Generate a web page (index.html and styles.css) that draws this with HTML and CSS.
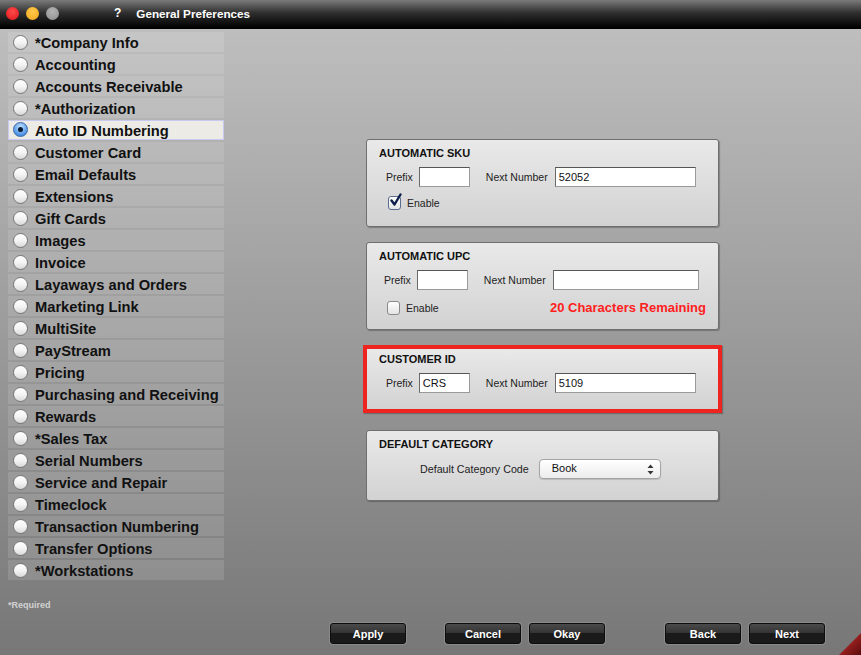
FILE: index.html
```html
<!DOCTYPE html>
<html lang="en">
<head>
    <meta charset="UTF-8">
    <title>General Preferences</title>
    <link rel="stylesheet" href="styles.css">
</head>
<body>
    <div class="window">
        <div class="titlebar">
            <span class="light red"></span>
            <span class="light yellow"></span>
            <span class="light gray"></span>
            <span class="help">?</span>
            <span class="title">General Preferences</span>
        </div>

        <div class="main">
            <div class="sidebar">
                <ul class="pref-list">
                    <li><span class="radio"></span>*Company Info</li>
                    <li><span class="radio"></span>Accounting</li>
                    <li><span class="radio"></span>Accounts Receivable</li>
                    <li><span class="radio"></span>*Authorization</li>
                    <li class="selected"><span class="radio"></span>Auto ID Numbering</li>
                    <li><span class="radio"></span>Customer Card</li>
                    <li><span class="radio"></span>Email Defaults</li>
                    <li><span class="radio"></span>Extensions</li>
                    <li><span class="radio"></span>Gift Cards</li>
                    <li><span class="radio"></span>Images</li>
                    <li><span class="radio"></span>Invoice</li>
                    <li><span class="radio"></span>Layaways and Orders</li>
                    <li><span class="radio"></span>Marketing Link</li>
                    <li><span class="radio"></span>MultiSite</li>
                    <li><span class="radio"></span>PayStream</li>
                    <li><span class="radio"></span>Pricing</li>
                    <li><span class="radio"></span>Purchasing and Receiving</li>
                    <li><span class="radio"></span>Rewards</li>
                    <li><span class="radio"></span>*Sales Tax</li>
                    <li><span class="radio"></span>Serial Numbers</li>
                    <li><span class="radio"></span>Service and Repair</li>
                    <li><span class="radio"></span>Timeclock</li>
                    <li><span class="radio"></span>Transaction Numbering</li>
                    <li><span class="radio"></span>Transfer Options</li>
                    <li><span class="radio"></span>*Workstations</li>
                </ul>
                <div class="required-note">*Required</div>
            </div>

            <div class="content">
                <div class="panel panel-sku">
                    <h3>AUTOMATIC SKU</h3>
                    <div class="field-row">
                        <label>Prefix</label>
                        <input type="text" class="prefix">
                        <label class="next-label">Next Number</label>
                        <input type="text" class="next" value="52052">
                    </div>
                    <div class="check-row">
                        <span class="checkbox checked">
                            <svg width="16" height="16" viewBox="0 0 16 16"><path d="M3.5 7.5 L6.5 11.5 L12.5 1.5" fill="none" stroke="#0d1d4a" stroke-width="2.4" stroke-linecap="round" stroke-linejoin="round"/></svg>
                        </span>
                        <span class="check-label">Enable</span>
                    </div>
                </div>

                <div class="panel panel-upc">
                    <h3>AUTOMATIC UPC</h3>
                    <div class="field-row">
                        <label>Prefix</label>
                        <input type="text" class="prefix">
                        <label class="next-label">Next Number</label>
                        <input type="text" class="next wide">
                    </div>
                    <div class="check-row">
                        <span class="checkbox"></span>
                        <span class="check-label">Enable</span>
                        <span class="remaining">20 Characters Remaining</span>
                    </div>
                </div>

                <div class="panel panel-customer">
                    <h3>CUSTOMER ID</h3>
                    <div class="field-row">
                        <label>Prefix</label>
                        <input type="text" class="prefix" value="CRS">
                        <label class="next-label">Next Number</label>
                        <input type="text" class="next" value="5109">
                    </div>
                </div>

                <div class="panel panel-category">
                    <h3>DEFAULT CATEGORY</h3>
                    <div class="select-row">
                        <label>Default Category Code</label>
                        <div class="select">
                            <span>Book</span>
                            <svg width="7" height="11" viewBox="0 0 7 11"><path d="M3.5 0.5 L6.5 4 L0.5 4 Z M0.5 7 L6.5 7 L3.5 10.5 Z" fill="#333"/></svg>
                        </div>
                    </div>
                </div>
            </div>
        </div>

        <div class="footer">
            <button class="btn btn-apply">Apply</button>
            <button class="btn btn-cancel">Cancel</button>
            <button class="btn">Okay</button>
            <button class="btn btn-back">Back</button>
            <button class="btn">Next</button>
        </div>

        <svg class="corner" width="22" height="22" viewBox="0 0 22 22">
            <defs>
                <linearGradient id="cg" x1="0" y1="0" x2="1" y2="1">
                    <stop offset="0" stop-color="#d23434"/>
                    <stop offset="1" stop-color="#5a0a0a"/>
                </linearGradient>
            </defs>
            <path d="M22 0 L22 22 L0 22 Z" fill="url(#cg)"/>
        </svg>
    </div>
</body>
</html>
```

FILE: styles.css
```css
* {
    box-sizing: border-box;
}

body {
    margin: 0;
    font-family: "Liberation Sans", Arial, sans-serif;
    color: #111;
}

.window {
    position: relative;
    width: 861px;
    height: 655px;
    display: flex;
    flex-direction: column;
    background: linear-gradient(#c1c1c1, #777777);
    overflow: hidden;
}

/* title bar */
.titlebar {
    height: 29px;
    flex-shrink: 0;
    display: flex;
    align-items: center;
    padding-left: 6px;
    background: linear-gradient(#7a7a7a, #303030 45%, #000 100%);
    border-bottom: 1px solid #000;
}

.light {
    width: 13px;
    height: 13px;
    border-radius: 50%;
    margin-right: 7px;
    margin-top: -2px;
}

.light.red { background: radial-gradient(circle at 50% 35%, #ff4a4a, #e0161c); }
.light.yellow { background: radial-gradient(circle at 50% 35%, #ffc94a, #f3a71d); }
.light.gray { background: radial-gradient(circle at 50% 35%, #b4b4b4, #8d8d8d); }

.help {
    color: #fff;
    font-size: 12px;
    font-weight: bold;
    margin-left: 48px;
    margin-top: -2px;
}

.title {
    color: #fff;
    font-size: 11.7px;
    font-weight: bold;
    margin-left: 15px;
    margin-top: -2px;
}

/* main */
.main {
    flex: 1;
    display: flex;
}

.sidebar {
    width: 224px;
    padding: 3px 0 0 8px;
    flex-shrink: 0;
}

.pref-list {
    list-style: none;
    margin: 0;
    padding: 0;
}

.pref-list li {
    height: 20px;
    margin-bottom: 2px;
    display: flex;
    align-items: center;
    padding: 2px 0 0 5px;
    font-size: 14.7px;
    font-weight: bold;
    color: #111;
    background: rgba(255, 255, 255, 0.12);
}

.pref-list li.selected {
    background: #ecebe5;
    border: 1px solid #c9c8ee;
    padding: 1px 0 0 4px;
}

.radio {
    width: 15px;
    height: 15px;
    border-radius: 50%;
    border: 1px solid #777;
    background: linear-gradient(#ffffff, #f4f4f4 50%, #d9d9d9);
    margin-right: 7px;
    margin-top: -2px;
    flex-shrink: 0;
    display: flex;
    align-items: center;
    justify-content: center;
}

.selected .radio {
    border-color: #3a66a8;
    background: radial-gradient(circle at 50% 30%, #bfe0ff, #4f95e6 70%, #2d6bc4);
}

.selected .radio::after {
    content: "";
    width: 5px;
    height: 5px;
    border-radius: 50%;
    background: #0b1a33;
}

.required-note {
    margin-top: 20px;
    font-size: 9px;
    font-weight: bold;
    color: #d2d2d2;
}

/* panels */
.content {
    flex: 1;
    padding: 110px 0 0 142px;
    display: flex;
    flex-direction: column;
}

.panel {
    width: 353px;
    border: 1px solid #6f6f6f;
    border-radius: 3px;
    background: linear-gradient(#e9e9e9, #d2d2d2);
    box-shadow: 1px 1px 1px rgba(0, 0, 0, 0.25);
    padding: 6px 0 0 12px;
}

.panel h3 {
    margin: 0;
    font-size: 11px;
    font-weight: bold;
    line-height: 15px;
    color: #111;
}

.panel-sku {
    height: 88px;
    margin-bottom: 15px;
}

.panel-upc {
    height: 88px;
    margin-bottom: 15px;
}

.panel-customer {
    height: 68px;
    width: 359px;
    margin-left: -3px;
    border: 4px solid #ee2420;
    border-radius: 0;
    padding: 3px 0 0 12px;
    margin-bottom: 17px;
}

.panel-category {
    height: 71px;
}

.field-row {
    display: flex;
    align-items: center;
    margin-top: 6px;
    padding-left: 7px;
    font-size: 10.5px;
    color: #222;
}

.panel-upc .field-row {
    padding-left: 5px;
}

.field-row label {
    margin-right: 6px;
}

.field-row .next-label {
    margin-left: 16px;
    margin-right: 7px;
}

.panel-upc .next-label {
    margin-left: 16px;
}

.field-row input {
    height: 20px;
    border: 1px solid #9a9a9a;
    border-top-color: #555;
    border-left-color: #6a6a6a;
    background: #fff;
    font-family: "Liberation Sans", Arial, sans-serif;
    font-size: 11px;
    padding: 0 3px;
    color: #111;
}

.field-row .prefix {
    width: 51px;
}

.field-row .next {
    width: 141px;
}

.field-row .next.wide {
    width: 146px;
}

.check-row {
    display: flex;
    align-items: center;
    margin-top: 9px;
    padding-left: 9px;
    padding-right: 12px;
    font-size: 10.5px;
    color: #222;
}

.panel-upc .check-row {
    padding-left: 8px;
    margin-top: 10px;
}

.checkbox {
    width: 13px;
    height: 14px;
    border: 1px solid #8a8a8a;
    border-radius: 3px;
    background: linear-gradient(#ffffff, #e4e4e4);
    position: relative;
    margin-right: 6px;
}

.checkbox.checked {
    border-color: #5b6c8f;
}

.checkbox svg {
    position: absolute;
    left: -1px;
    top: -4px;
}

.remaining {
    margin-left: auto;
    color: #ff2020;
    font-size: 13px;
    font-weight: bold;
}

.select-row {
    display: flex;
    align-items: center;
    margin-top: 7px;
    padding-left: 41px;
    font-size: 10.7px;
    color: #222;
}

.select-row label {
    margin-right: 10px;
}

.select {
    width: 122px;
    height: 20px;
    border: 1px solid #a5a5a5;
    border-radius: 4px;
    background: linear-gradient(#ffffff, #ececec);
    display: flex;
    align-items: center;
    justify-content: space-between;
    padding: 0 6px 0 12px;
    font-size: 11px;
    color: #111;
    box-shadow: 0 1px 1px rgba(0, 0, 0, 0.15);
}

.select span {
    margin-top: -2px;
}

/* footer buttons */
.footer {
    height: 42px;
    flex-shrink: 0;
    display: flex;
    align-items: flex-start;
    padding: 10px 0 0 330px;
}

.btn {
    width: 76px;
    height: 21px;
    border: 1px solid #0c0c0c;
    border-radius: 3px;
    background: linear-gradient(#4a4a4a, #353535 45%, #1a1a1a 46%, #1a1a1a);
    box-shadow: 0 0 0 1px rgba(150, 150, 150, 0.6);
    color: #fff;
    font-family: "Liberation Sans", Arial, sans-serif;
    font-size: 11px;
    font-weight: bold;
    padding: 0;
    margin-right: 8px;
}

.btn-apply {
    margin-right: 39px;
}

.btn-back {
    margin-left: 52px;
}

.corner {
    position: absolute;
    right: 0;
    bottom: 0;
}
```
